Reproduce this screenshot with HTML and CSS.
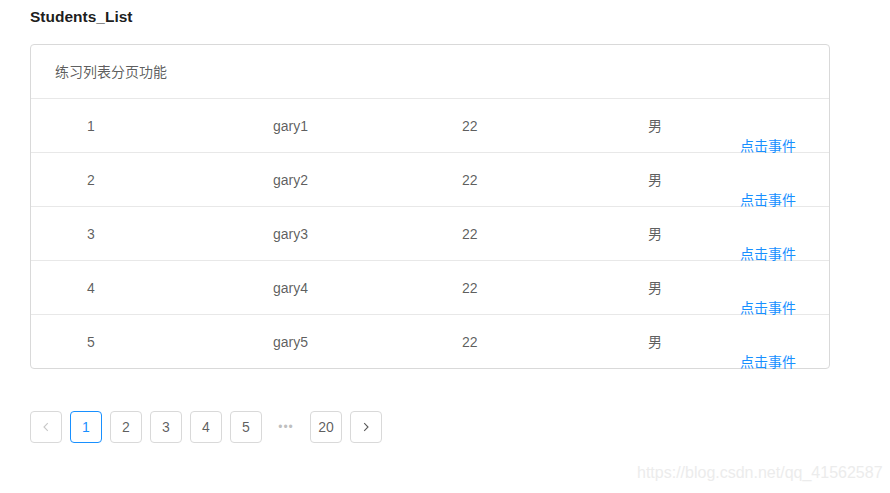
FILE: index.html
```html
<!DOCTYPE html>
<html lang="zh">
<head>
<meta charset="utf-8">
<link rel="stylesheet" href="styles.css">
</head>
<body>
<div class="page">
  <h3 class="title">Students_List</h3>
  <div class="list">
    <div class="list-header">练习列表分页功能</div>
    <div class="item"><span>1</span><span>gary1</span><span>22</span><span>男</span><a class="action">点击事件</a></div>
    <div class="item"><span>2</span><span>gary2</span><span>22</span><span>男</span><a class="action">点击事件</a></div>
    <div class="item"><span>3</span><span>gary3</span><span>22</span><span>男</span><a class="action">点击事件</a></div>
    <div class="item"><span>4</span><span>gary4</span><span>22</span><span>男</span><a class="action">点击事件</a></div>
    <div class="item last"><span>5</span><span>gary5</span><span>22</span><span>男</span><a class="action">点击事件</a></div>
  </div>
  <ul class="pagination">
    <li class="pg disabled"><svg width="10" height="10" viewBox="0 0 10 10"><path d="M6.8 1.2 3 5l3.8 3.8" fill="none" stroke="currentColor" stroke-width="1.1"/></svg></li>
    <li class="pg active">1</li>
    <li class="pg">2</li>
    <li class="pg">3</li>
    <li class="pg">4</li>
    <li class="pg">5</li>
    <li class="ellipsis">•••</li>
    <li class="pg">20</li>
    <li class="pg"><svg width="10" height="10" viewBox="0 0 10 10"><path d="M3.2 1.2 7 5 3.2 8.8" fill="none" stroke="currentColor" stroke-width="1.1"/></svg></li>
  </ul>
</div>
<div class="watermark">https://blog.csdn.net/qq_41562587</div>
</body>
</html>
```

FILE: styles.css
```css
html, body {
  margin: 0;
  padding: 0;
  background: #fff;
}
body {
  font-family: "Liberation Sans", "Noto Sans CJK SC", sans-serif;
  font-size: 14px;
  color: rgba(0, 0, 0, 0.65);
  width: 890px;
  height: 493px;
  position: relative;
  overflow: hidden;
}
.page {
  padding: 6px 0 0 30px;
}
.title {
  margin: 0 0 16px 0;
  font-size: 15.5px;
  line-height: 22px;
  font-weight: bold;
  color: rgba(0, 0, 0, 0.9);
}
.list {
  width: 798px;
  border: 1px solid #d9d9d9;
  border-radius: 4px;
}
.list-header {
  padding: 16px 24px 15px;
  line-height: 22px;
  border-bottom: 1px solid #e8e8e8;
}
.item {
  display: grid;
  grid-template-columns: 186px 189px 186px 92px 1fr;
  padding: 16px 24px 15px 56px;
  line-height: 22px;
  border-bottom: 1px solid #e8e8e8;
}
.item.last {
  border-bottom: none;
}
.action {
  color: #1890ff;
  margin-top: 20px;
  margin-bottom: -20px;
  cursor: pointer;
}
.pagination {
  list-style: none;
  margin: 42px 0 0 0;
  padding: 0;
  display: flex;
  gap: 8px;
}
.pg {
  box-sizing: border-box;
  min-width: 32px;
  height: 32px;
  padding: 0 6px;
  border: 1px solid #d9d9d9;
  border-radius: 4px;
  display: flex;
  align-items: center;
  justify-content: center;
  font-size: 14px;
  color: rgba(0, 0, 0, 0.65);
}
.pg.active {
  border-color: #1890ff;
  color: #1890ff;
}
.pg.disabled {
  color: #c8c8c8;
}
.ellipsis {
  width: 32px;
  height: 32px;
  display: flex;
  align-items: center;
  justify-content: center;
  color: #bfbfbf;
  font-size: 12px;
  letter-spacing: 1px;
}
.watermark {
  position: absolute;
  left: 637px;
  top: 463px;
  font-size: 16px;
  line-height: 20px;
  color: #ececec;
  font-family: "Liberation Sans", sans-serif;
}
```
